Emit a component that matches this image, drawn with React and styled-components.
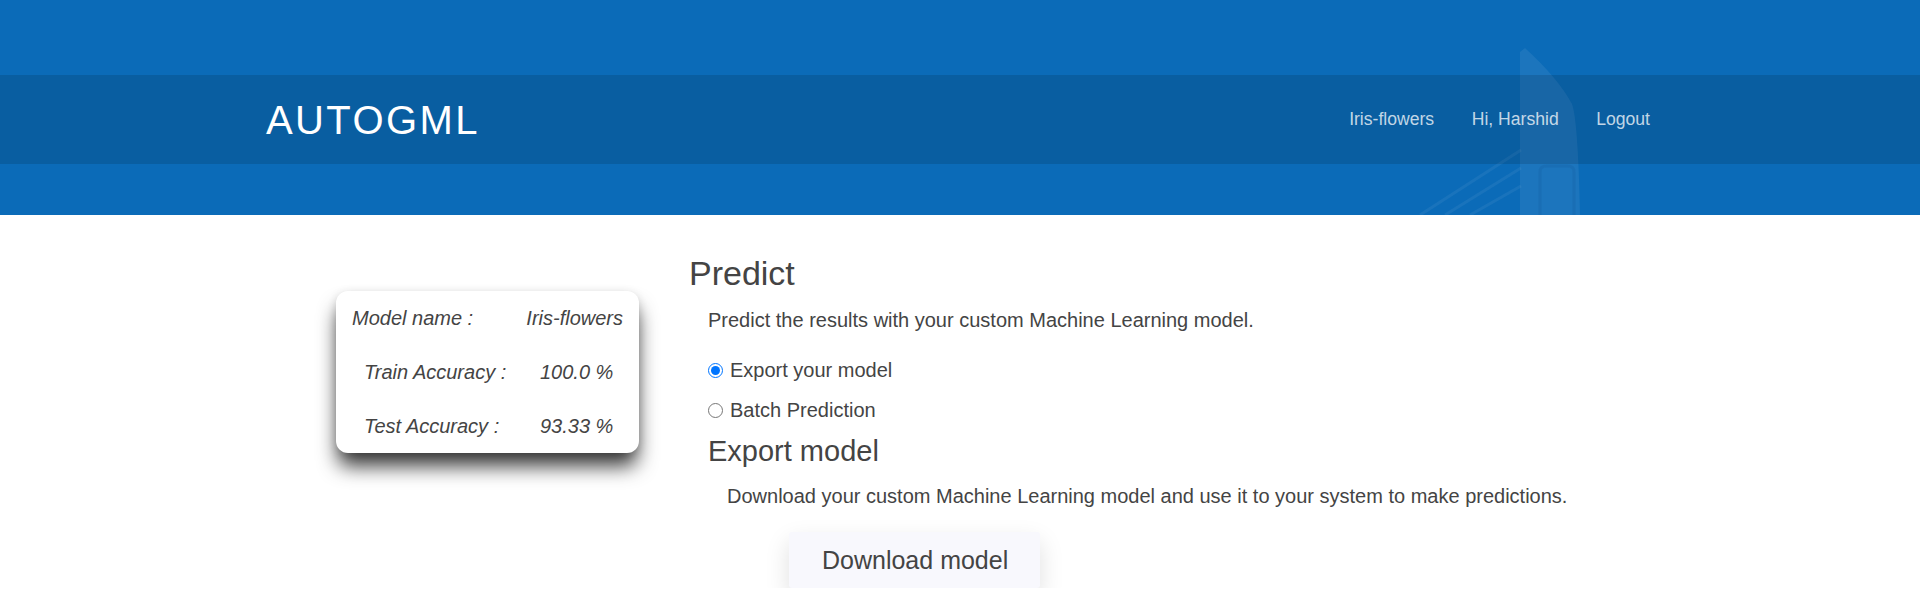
import React from "react";
import styled, { createGlobalStyle } from "styled-components";

const GlobalStyle = createGlobalStyle`
  html, body {
    margin: 0;
    padding: 0;
    background: #ffffff;
  }
  body {
    font-family: "Liberation Sans", Arial, Helvetica, sans-serif;
    color: #444444;
  }
  * { box-sizing: border-box; }
`;

const Header = styled.header`
  position: relative;
  height: 215px;
  background: #0b6bb8;
  overflow: hidden;
  padding-top: 75px;
`;

const Wing = styled.svg`
  position: absolute;
  top: 0;
  left: 1400px;
  width: 220px;
  height: 215px;
  pointer-events: none;
`;

const NavBand = styled.nav`
  position: relative;
  z-index: 1;
  height: 89px;
  background: rgba(0, 0, 0, 0.12);
  display: flex;
  align-items: center;
  justify-content: space-between;
  padding: 0 270px 0 266px;
`;

const Brand = styled.div`
  font-size: 40px;
  letter-spacing: 2.4px;
  color: #ffffff;
  line-height: 1;
`;

const NavLinks = styled.div`
  display: flex;
  align-items: center;
  gap: 37.5px;
`;

const NavLink = styled.a`
  font-size: 17.6px;
  color: rgba(255, 255, 255, 0.76);
  text-decoration: none;
  line-height: 1;
`;

const Main = styled.main`
  display: flex;
  align-items: flex-start;
  padding-left: 336px;
`;

const Side = styled.aside`
  width: 353px;
  flex: none;
  padding-top: 76px;
`;

const StatsCard = styled.div`
  width: 303px;
  background: #ffffff;
  border-radius: 12px;
  box-shadow: 0 15px 20px -2px rgba(0, 0, 0, 0.78), 0 2px 10px rgba(0, 0, 0, 0.12);
  font-style: italic;
  font-size: 20px;
  color: #444444;
`;

const CardHeadRow = styled.div`
  display: flex;
  justify-content: space-between;
  padding: 0 16px;
  line-height: 54px;
`;

const CardRow = styled.div`
  display: grid;
  grid-template-columns: 176px auto;
  padding-left: 28px;
  line-height: 54px;
`;

const Content = styled.section`
  padding-top: 38px;
`;

const Title = styled.h2`
  margin: 0;
  font-size: 34px;
  line-height: 40px;
  font-weight: 400;
  color: #444444;
`;

const Indent = styled.div`
  padding-left: ${(p) => p.$by}px;
  margin-top: ${(p) => p.$top || 0}px;
`;

const Text = styled.p`
  margin: 0;
  font-size: 20px;
  line-height: 24px;
  color: #444444;
`;

const RadioList = styled.div`
  display: flex;
  flex-direction: column;
  gap: 16px;
  margin-top: 26px;
`;

const RadioRow = styled.label`
  display: flex;
  align-items: center;
  height: 24px;
  font-size: 20px;
  color: #444444;
  cursor: pointer;
`;

const Radio = styled.input`
  width: 15px;
  height: 15px;
  margin: 0 7px 0 0;
  accent-color: #0075ff;
`;

const SubTitle = styled.h3`
  margin: 12px 0 0;
  font-size: 29px;
  line-height: 34px;
  font-weight: 400;
  color: #444444;
`;

const DownloadButton = styled.button`
  display: block;
  margin: 24px 0 0 62px;
  height: 56px;
  padding: 0 32px 0 33px;
  border: none;
  border-radius: 3px;
  background: #f8f8fd;
  box-shadow: 0 10px 24px rgba(0, 0, 0, 0.13);
  font-family: inherit;
  font-size: 25px;
  color: #444444;
  cursor: pointer;
`;

export default function App() {
  const [mode, setMode] = React.useState("export");
  return (
    <>
      <GlobalStyle />
      <Header>
        <Wing viewBox="0 0 220 215" aria-hidden="true">
          <g stroke="rgba(255,255,255,0.06)" strokeWidth="3" fill="none">
            <line x1="20" y1="215" x2="121" y2="150" />
            <line x1="45" y1="215" x2="121" y2="168" />
            <line x1="70" y1="215" x2="121" y2="186" />
          </g>
          <path
            d="M120 52 L125 48 Q158 78 172 104 Q178 120 180 215 L120 215 Z"
            fill="rgba(255,255,255,0.07)"
          />
          <path
            d="M140 215 L140 172 Q140 166 146 166 L168 166 Q174 166 174 172 L174 215"
            fill="none"
            stroke="rgba(0,40,90,0.08)"
            strokeWidth="3"
          />
        </Wing>
        <NavBand>
          <Brand>AUTOGML</Brand>
          <NavLinks>
            <NavLink href="#">Iris-flowers</NavLink>
            <NavLink href="#">Hi, Harshid</NavLink>
            <NavLink href="#">Logout</NavLink>
          </NavLinks>
        </NavBand>
      </Header>
      <Main>
        <Side>
          <StatsCard>
            <CardHeadRow>
              <span>Model name :</span>
              <span>Iris-flowers</span>
            </CardHeadRow>
            <CardRow>
              <span>Train Accuracy :</span>
              <span>100.0 %</span>
            </CardRow>
            <CardRow>
              <span>Test Accuracy :</span>
              <span>93.33 %</span>
            </CardRow>
          </StatsCard>
        </Side>
        <Content>
          <Title>Predict</Title>
          <Indent $by={19} $top={15}>
            <Text>Predict the results with your custom Machine Learning model.</Text>
            <RadioList>
              <RadioRow>
                <Radio
                  type="radio"
                  name="mode"
                  checked={mode === "export"}
                  onChange={() => setMode("export")}
                />
                Export your model
              </RadioRow>
              <RadioRow>
                <Radio
                  type="radio"
                  name="mode"
                  checked={mode === "batch"}
                  onChange={() => setMode("batch")}
                />
                Batch Prediction
              </RadioRow>
            </RadioList>
            <SubTitle>Export model</SubTitle>
            <Indent $by={19} $top={16}>
              <Text>
                Download your custom Machine Learning model and use it to your system to make predictions.
              </Text>
              <DownloadButton type="button">Download model</DownloadButton>
            </Indent>
          </Indent>
        </Content>
      </Main>
    </>
  );
}
